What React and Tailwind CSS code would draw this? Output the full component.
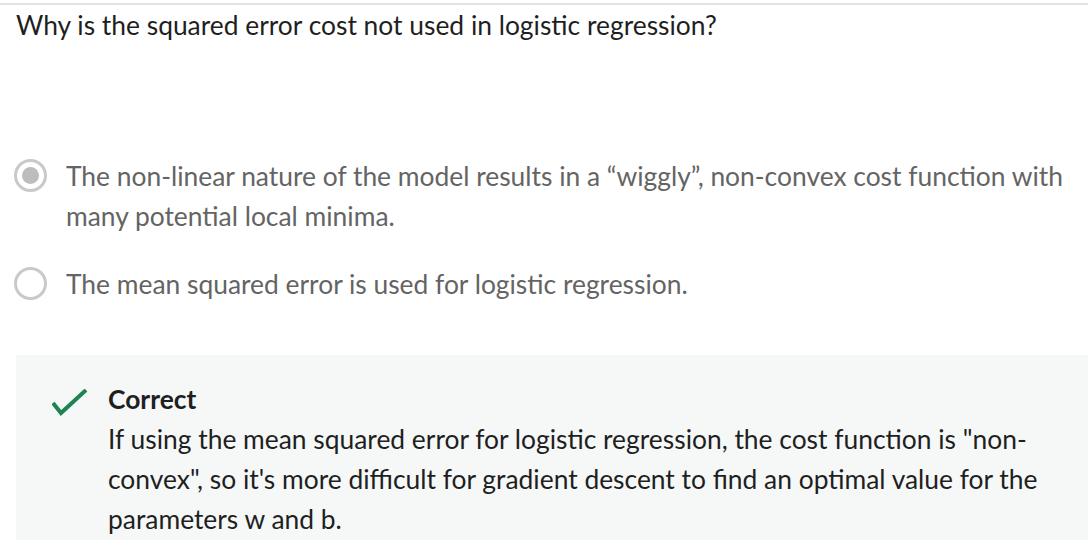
import React from "react";

function Radio({ checked }) {
  return (
    <div className="mt-[3px] flex h-[33px] w-[33px] shrink-0 items-center justify-center rounded-full border-[3px] border-[#c9c9c9] bg-white">
      {checked && <div className="h-[17px] w-[17px] rounded-full bg-[#bdbdbd]" />}
    </div>
  );
}

function Option({ checked, children }) {
  return (
    <div className="flex items-start pl-[14px]">
      <Radio checked={checked} />
      <div className="ml-[19px] whitespace-nowrap text-[26.4px] leading-[40px] text-[#646464]">
        {children}
      </div>
    </div>
  );
}

export default function App() {
  return (
    <div
      className="h-[540px] w-full overflow-hidden bg-white pt-[3px]"
      style={{ fontFamily: "Lato, 'Noto Sans', sans-serif" }}
    >
      <div className="border-t-2 border-[#e2e2e2]">
        <h2 className="pl-4 text-[26.4px] leading-[40px] text-[#1f1f1f]">
          Why is the squared error cost not used in logistic regression?
        </h2>

        <div className="mt-[111px] flex flex-col gap-[28px]">
          <Option checked>
            The non-linear nature of the model results in a “wiggly”, non-convex cost function with
            <br />
            many potential local minima.
          </Option>
          <Option>The mean squared error is used for logistic regression.</Option>
        </div>

        <div className="ml-4 mt-[51px] flex bg-[#f5f8f7] pb-8 pl-[36px] pt-6">
          <svg width="36" height="28" viewBox="0 0 36 28" className="mt-[10px] shrink-0">
            <polyline
              points="1,14 9,24 34,1"
              fill="none"
              stroke="#1f8354"
              strokeWidth="4"
            />
          </svg>
          <div className="ml-[20px] whitespace-nowrap text-[26.4px] leading-[40px] text-[#1f1f1f]">
            <div className="font-bold">Correct</div>
            <div>
              If using the mean squared error for logistic regression, the cost function is "non-
              <br />
              convex", so it's more difficult for gradient descent to find an optimal value for the
              <br />
              parameters w and b.
            </div>
          </div>
        </div>
      </div>
    </div>
  );
}
